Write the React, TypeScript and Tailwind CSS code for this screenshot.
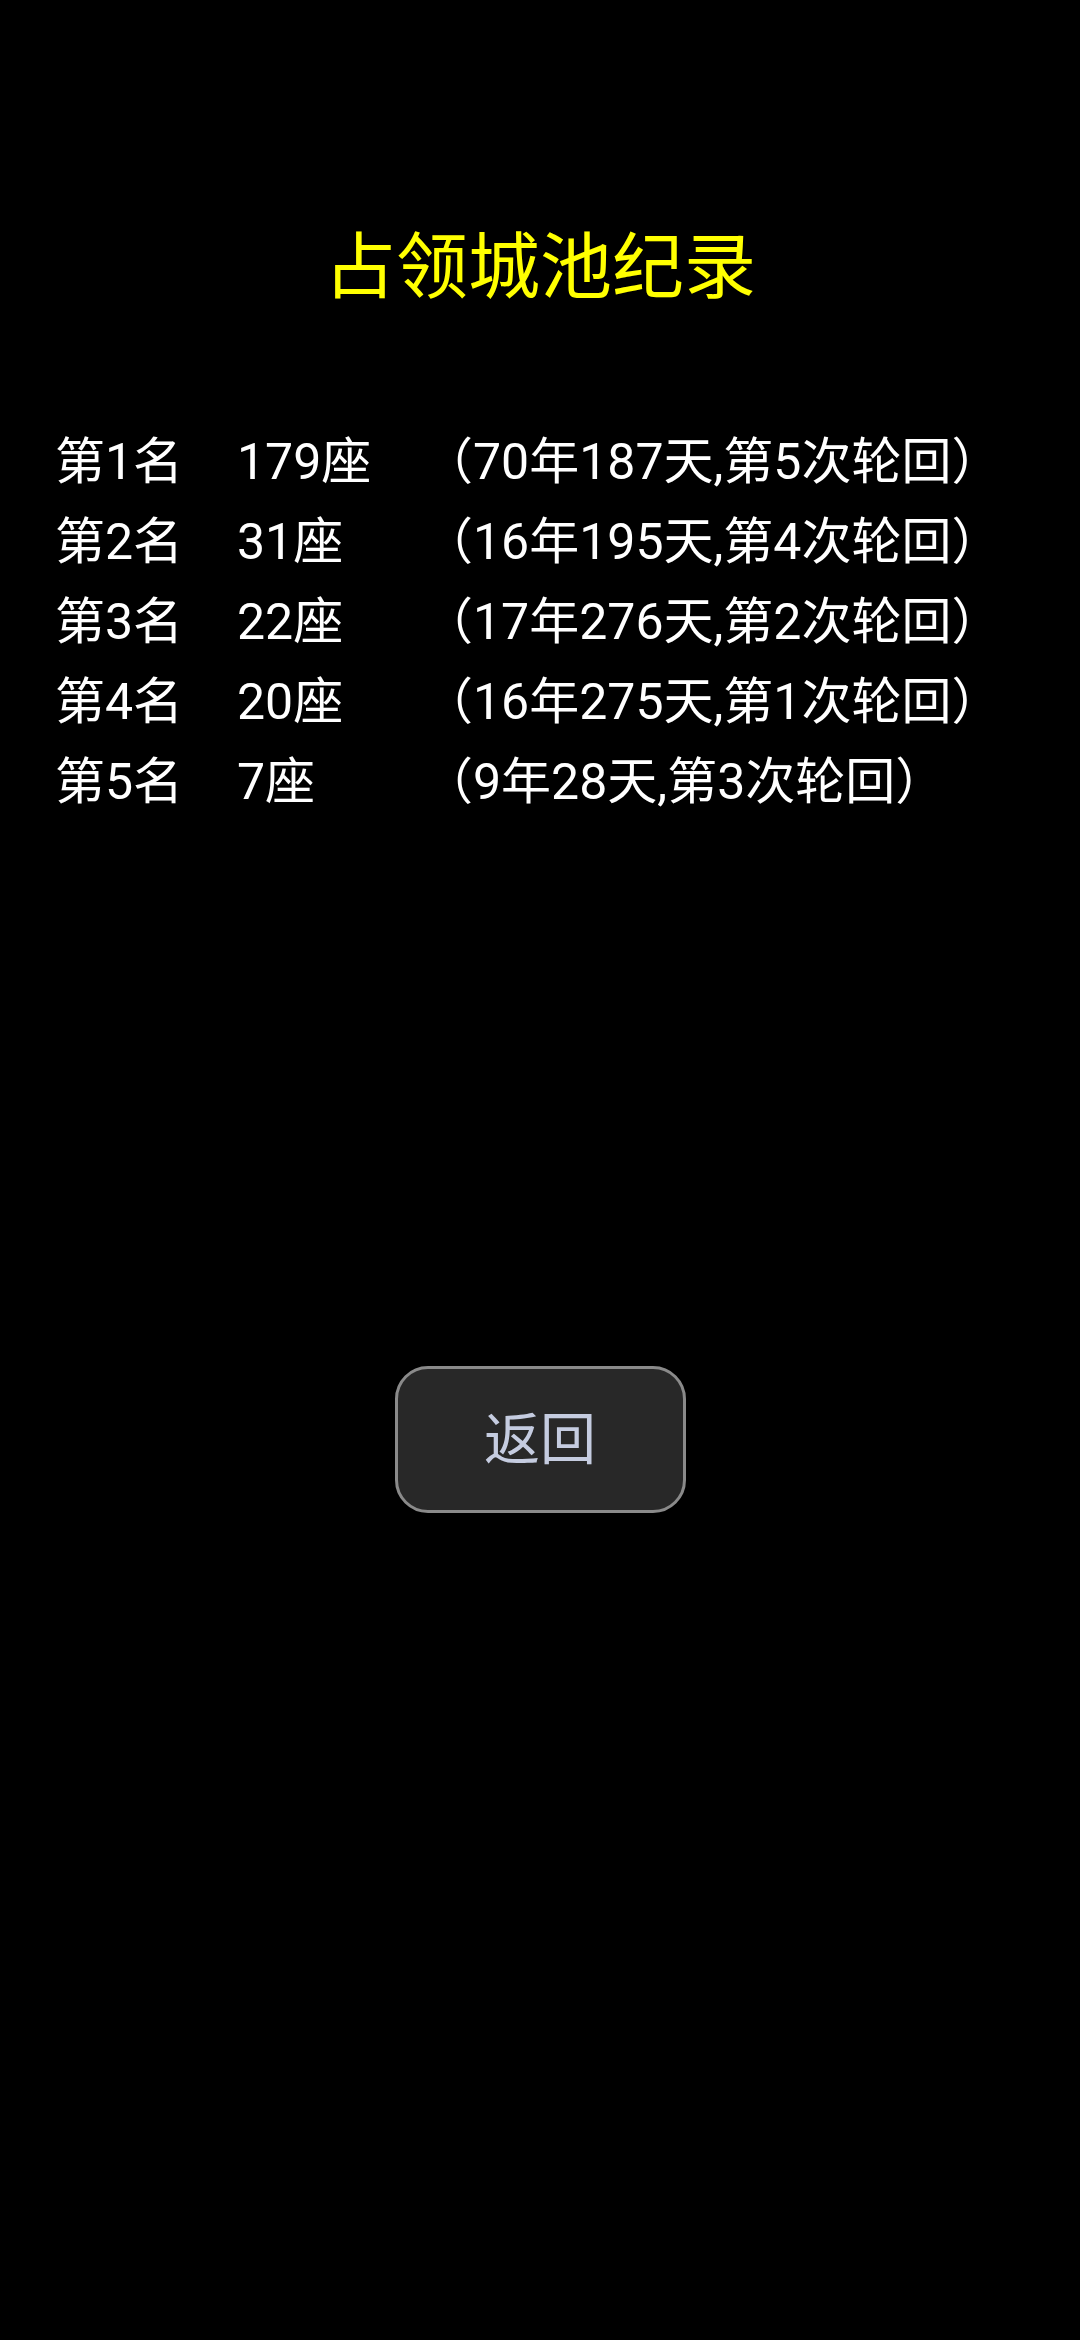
import React from "react";

const records = [
  { rank: "第1名", count: "179座", detail: "（70年187天,第5次轮回）" },
  { rank: "第2名", count: "31座", detail: "（16年195天,第4次轮回）" },
  { rank: "第3名", count: "22座", detail: "（17年276天,第2次轮回）" },
  { rank: "第4名", count: "20座", detail: "（16年275天,第1次轮回）" },
  { rank: "第5名", count: "7座", detail: "（9年28天,第3次轮回）" },
];

export default function App() {
  return (
    <div className="flex flex-col items-center w-full min-h-[2340px] bg-black font-['Roboto','Noto_Sans_CJK_SC',sans-serif]">
      {/* Title */}
      <h1 className="pt-[232px] text-[72px] leading-[72px] text-[#ffff00]">占领城池纪录</h1>

      {/* Record list */}
      <div className="mt-[118px] w-full pl-[55px] text-white text-[50px] leading-[80px]">
        {records.map((r) => (
          <div key={r.rank} className="flex whitespace-nowrap">
            <span className="w-[182px]">{r.rank}</span>
            <span className="w-[186px]">{r.count}</span>
            <span>{r.detail}</span>
          </div>
        ))}
      </div>

      {/* Back button */}
      <button className="mt-[544px] flex items-center justify-center w-[291px] h-[147px] rounded-[33px] border-[3px] border-[#8a8a8a] bg-[#282828] text-[56px] text-[#c5cce0]">
        返回
      </button>
    </div>
  );
}
